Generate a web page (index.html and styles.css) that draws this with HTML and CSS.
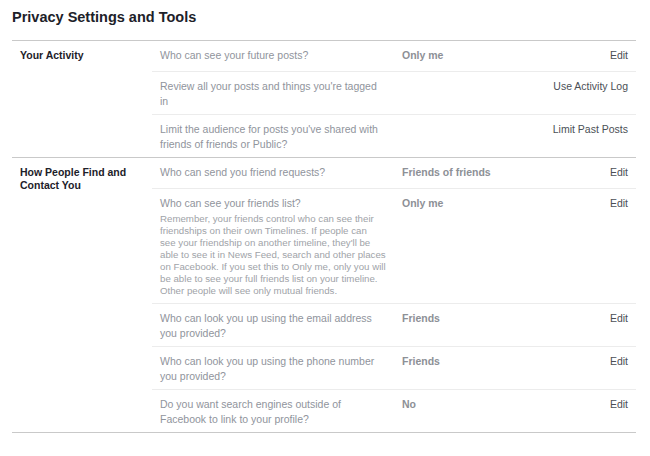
FILE: index.html
```html
<!DOCTYPE html>
<html lang="en">
<head>
  <meta charset="UTF-8" />
  <meta name="viewport" content="width=device-width, initial-scale=1.0"/>
  <title>Privacy Settings and Tools</title>
  <link rel="stylesheet" href="styles.css">
</head>
<body>

<div class="page">
  <h2>Privacy Settings and Tools</h2>

  <div class="section">
    <div class="section-label">Your Activity</div>
    <div class="rows">
      <div class="row">
        <div class="question">Who can see your future posts?</div>
        <div class="value">Only me</div>
        <a class="action">Edit</a>
      </div>
      <div class="row">
        <div class="question">Review all your posts and things you're tagged in</div>
        <div class="value"></div>
        <a class="action">Use Activity Log</a>
      </div>
      <div class="row">
        <div class="question">Limit the audience for posts you've shared with friends of friends or Public?</div>
        <div class="value"></div>
        <a class="action">Limit Past Posts</a>
      </div>
    </div>
  </div>

  <div class="section">
    <div class="section-label">How People Find and Contact You</div>
    <div class="rows">
      <div class="row">
        <div class="question">Who can send you friend requests?</div>
        <div class="value">Friends of friends</div>
        <a class="action">Edit</a>
      </div>
      <div class="row tall">
        <div class="question">
          Who can see your friends list?
          <p class="note">Remember, your friends control who can see their<br>
            friendships on their own Timelines. If people can<br>
            see your friendship on another timeline, they'll be<br>
            able to see it in News Feed, search and other places<br>
            on Facebook. If you set this to Only me, only you will<br>
            be able to see your full friends list on your timeline.<br>
            Other people will see only mutual friends.</p>
        </div>
        <div class="value">Only me</div>
        <a class="action">Edit</a>
      </div>
      <div class="row">
        <div class="question">Who can look you up using the email address you provided?</div>
        <div class="value">Friends</div>
        <a class="action">Edit</a>
      </div>
      <div class="row">
        <div class="question">Who can look you up using the phone number you provided?</div>
        <div class="value">Friends</div>
        <a class="action">Edit</a>
      </div>
      <div class="row">
        <div class="question">Do you want search engines outside of Facebook to link to your profile?</div>
        <div class="value">No</div>
        <a class="action">Edit</a>
      </div>
    </div>
  </div>
</div>

</body>
</html>
```

FILE: styles.css
```css
body {
  margin: 0;
  background: #fff;
  font-family: 'Liberation Sans', Arial, sans-serif;
  color: #1d2129;
}

.page {
  padding: 0 14px 0 12px;
}

h2 {
  margin: 0;
  padding: 8px 0 14px;
  font-size: 14.5px;
  font-weight: 700;
  line-height: 18px;
  color: #1d2129;
}

.section {
  display: flex;
  border-top: 1px solid #c9c9c9;
}

.section:last-child {
  border-bottom: 1px solid #c9c9c9;
}

.section-label {
  width: 120px;
  flex: none;
  padding: 8px 12px 0 8px;
  font-size: 10.5px;
  font-weight: 700;
  line-height: 13px;
  color: #1d2129;
}

.rows {
  flex: 1;
}

.row {
  display: flex;
  align-items: flex-start;
  padding: 7px 8px 5px;
  min-height: 18px;
  border-bottom: 1px solid #ececec;
  font-size: 10.5px;
  line-height: 15px;
}

.row:last-child {
  border-bottom: none;
}

.row.tall {
  padding-bottom: 6px;
}

.question {
  width: 226px;
  flex: none;
  color: #90949c;
}

.note {
  margin: 2px -20px 0 0;
  font-size: 9.7px;
  line-height: 12px;
  color: #a0a3a8;
  white-space: nowrap;
}

.value {
  flex: 1;
  margin-left: 16px;
  font-weight: 700;
  color: #8d9096;
}

.action {
  color: #4b4f56;
  cursor: pointer;
  white-space: nowrap;
}
```
